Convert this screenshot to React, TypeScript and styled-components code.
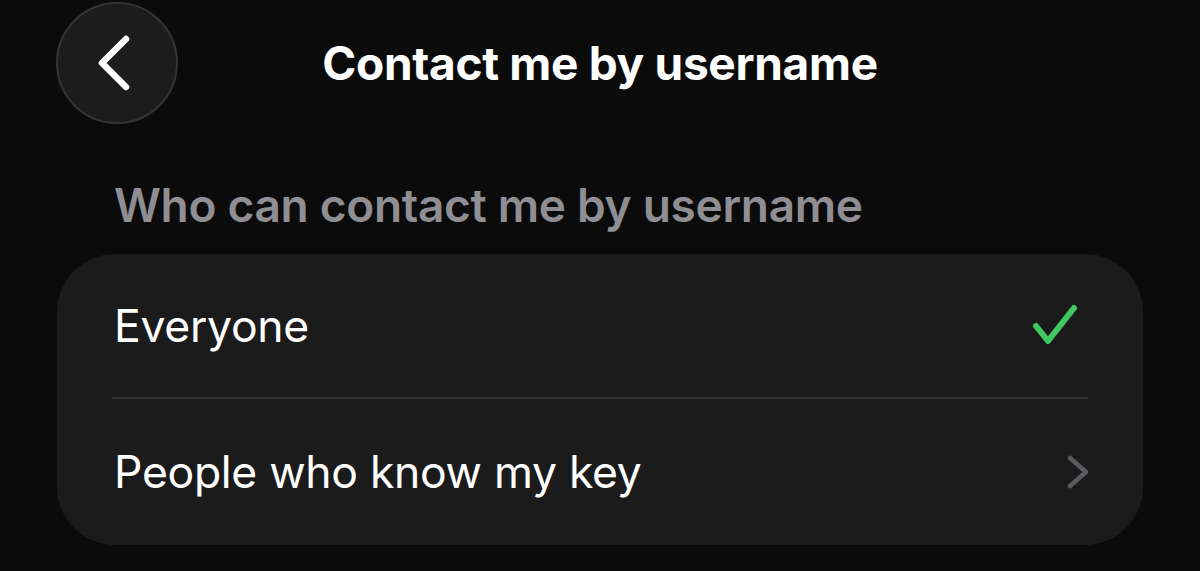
import React from "react";
import styled, { createGlobalStyle } from "styled-components";

const Global = createGlobalStyle`
  html, body {
    margin: 0;
    padding: 0;
    background: #0b0b0b;
  }
  body {
    font-family: Inter, "Noto Sans", "Liberation Sans", sans-serif;
    -webkit-font-smoothing: antialiased;
  }
`;

const Page = styled.div`
  width: 1200px;
  height: 571px;
  overflow: hidden;
  background: #0b0b0b;
  display: flex;
  flex-direction: column;
`;

const Header = styled.header`
  display: grid;
  grid-template-columns: 1fr auto 1fr;
  align-items: center;
  padding: 2px 56px 0;
  height: 122px;
`;

const BackButton = styled.button`
  width: 122px;
  height: 122px;
  border-radius: 50%;
  background: #1c1c1c;
  border: 2px solid #343434;
  box-sizing: border-box;
  display: flex;
  align-items: center;
  justify-content: center;
  padding: 0 4px 0 0;
  cursor: pointer;
`;

const Title = styled.h1`
  margin: 0;
  font-size: 46px;
  font-weight: 700;
  color: #ffffff;
  letter-spacing: -0.3px;
`;

const SectionLabel = styled.h2`
  margin: 53px 0 0 114px;
  font-size: 46px;
  line-height: 56px;
  font-weight: 600;
  color: #8e8e93;
  letter-spacing: -0.3px;
`;

const Card = styled.div`
  margin: 21px 0 0 57px;
  width: 1086px;
  background: #1b1b1c;
  border-radius: 58px;
  display: flex;
  flex-direction: column;
  padding: 0 55px;
  box-sizing: border-box;
`;

const Row = styled.div<{ $height: number }>`
  height: ${(p) => p.$height}px;
  display: flex;
  align-items: center;
  justify-content: space-between;
`;

const RowLabel = styled.span`
  font-size: 44.5px;
  font-weight: 400;
  color: #ffffff;
  letter-spacing: -0.3px;
  padding-left: 2px;
`;

const Divider = styled.div`
  height: 2px;
  background: #353537;
`;

const CheckIcon = () => (
  <svg width="48" height="46" viewBox="0 0 48 46" style={{ marginRight: 8 }}>
    <path
      d="M4 23 L16 38 L42 5"
      fill="none"
      stroke="#40c760"
      strokeWidth="6"
      strokeLinecap="round"
      strokeLinejoin="round"
    />
  </svg>
);

const ChevronRight = () => (
  <svg width="24" height="34" viewBox="0 0 24 34" style={{ marginRight: -2 }}>
    <path
      d="M4 3 L20 17 L4 31"
      fill="none"
      stroke="#5b5b60"
      strokeWidth="4.5"
      strokeLinecap="round"
      strokeLinejoin="round"
    />
  </svg>
);

const ChevronLeft = () => (
  <svg width="34" height="56" viewBox="0 0 34 56">
    <path
      d="M28 4 L4 28 L28 52"
      fill="none"
      stroke="#ffffff"
      strokeWidth="6.5"
      strokeLinecap="round"
      strokeLinejoin="round"
    />
  </svg>
);

export default function App() {
  return (
    <Page>
      <Global />
      <Header>
        <div>
          <BackButton aria-label="Back">
            <ChevronLeft />
          </BackButton>
        </div>
        <Title>Contact me by username</Title>
        <div />
      </Header>
      <SectionLabel>Who can contact me by username</SectionLabel>
      <Card>
        <Row $height={143}>
          <RowLabel>Everyone</RowLabel>
          <CheckIcon />
        </Row>
        <Divider />
        <Row $height={146}>
          <RowLabel>People who know my key</RowLabel>
          <ChevronRight />
        </Row>
      </Card>
    </Page>
  );
}
